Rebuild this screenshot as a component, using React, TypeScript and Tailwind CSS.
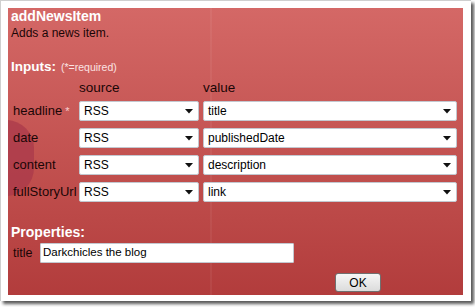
const font = { fontFamily: '"Liberation Sans", Arial, sans-serif' };

type Row = { label: string; required?: boolean; source: string; value: string };

const rows: Row[] = [
  { label: "headline", required: true, source: "RSS", value: "title" },
  { label: "date", source: "RSS", value: "publishedDate" },
  { label: "content", source: "RSS", value: "description" },
  { label: "fullStoryUrl", source: "RSS", value: "link" },
];

function Select({ text, width }: { text: string; width: string }) {
  return (
    <div
      className={`${width} h-[20px] bg-white border border-[#c3c8d0] rounded-[2px] flex items-center justify-between pl-[4px] pr-[5px]`}
    >
      <span className="text-[12px] text-black leading-none">{text}</span>
      <svg width="8" height="5" viewBox="0 0 8 5">
        <path d="M0 0 H8 L4 4.5 Z" fill="#111" />
      </svg>
    </div>
  );
}

export default function App() {
  return (
    <div className="w-[475px] h-[307px] bg-white" style={font}>
      <div className="w-[471px] h-[301px] bg-white border-t border-l border-[#cfcfcf] shadow-[3px_3px_3px_rgba(0,0,0,0.65)] pl-[7px] pt-[7px]">
        <div className="relative w-[455px] h-[287px] overflow-hidden bg-gradient-to-b from-[#d46866] to-[#b23c3c] pl-[3px]">
          {/* decoration behind the content */}
          <div className="absolute left-[-30px] top-[112px] w-[56px] h-[76px] rounded-full bg-[#a8384a] opacity-70" />
          <div className="absolute left-[202px] top-0 w-[2px] h-full bg-white/5" />

          <div className="relative flex flex-col">
            <div className="h-[17px] leading-[17px] text-[14px] font-bold text-white">addNewsItem</div>
            <div className="h-[17px] leading-[17px] text-[12px] text-[#1a0606]">Adds a news item.</div>

            <div className="mt-[17px] h-[16px] leading-[16px] flex items-baseline gap-[5px]">
              <span className="text-[13.5px] font-bold text-white">Inputs:</span>
              <span className="text-[10.5px] text-[#fbe3e3]">(*=required)</span>
            </div>

            <div className="mt-[5px] h-[16px] leading-[16px] flex text-[13.5px] text-[#1a0606]">
              <span className="w-[68px]" />
              <span className="w-[124px]">source</span>
              <span>value</span>
            </div>

            <div className="mt-[5px] flex flex-col gap-[7px]">
              {rows.map((r) => (
                <div key={r.label} className="flex items-center">
                  <div className="w-[68px] pl-[2px] text-[13px] text-[#1a0606] whitespace-nowrap">
                    {r.label}
                    {r.required && <span className="text-[#f6cfcf] text-[11px] ml-[3px]">*</span>}
                  </div>
                  <Select text={r.source} width="w-[120px]" />
                  <div className="w-[4px]" />
                  <Select text={r.value} width="w-[254px]" />
                </div>
              ))}
            </div>

            <div className="mt-[22px] h-[16px] leading-[16px] text-[14px] font-bold text-white">Properties:</div>

            <div className="mt-[3px] flex items-center">
              <span className="pl-[2px] w-[29px] text-[12.5px] text-[#1a0606]">title</span>
              <div className="w-[254px] h-[20px] bg-white border border-[#c3c8d0] rounded-[1px] flex items-center pl-[2px]">
                <span className="text-[11.5px] text-black">Darkchicles the blog</span>
              </div>
            </div>

            <div className="mt-[10px] flex pl-[324px]">
              <button className="w-[46px] h-[19px] rounded-[3px] border border-[#707070] bg-gradient-to-b from-[#f6f6f6] to-[#dcdcdc] text-[12px] text-black leading-none flex items-center justify-center">
                OK
              </button>
            </div>
          </div>
        </div>
      </div>
    </div>
  );
}
